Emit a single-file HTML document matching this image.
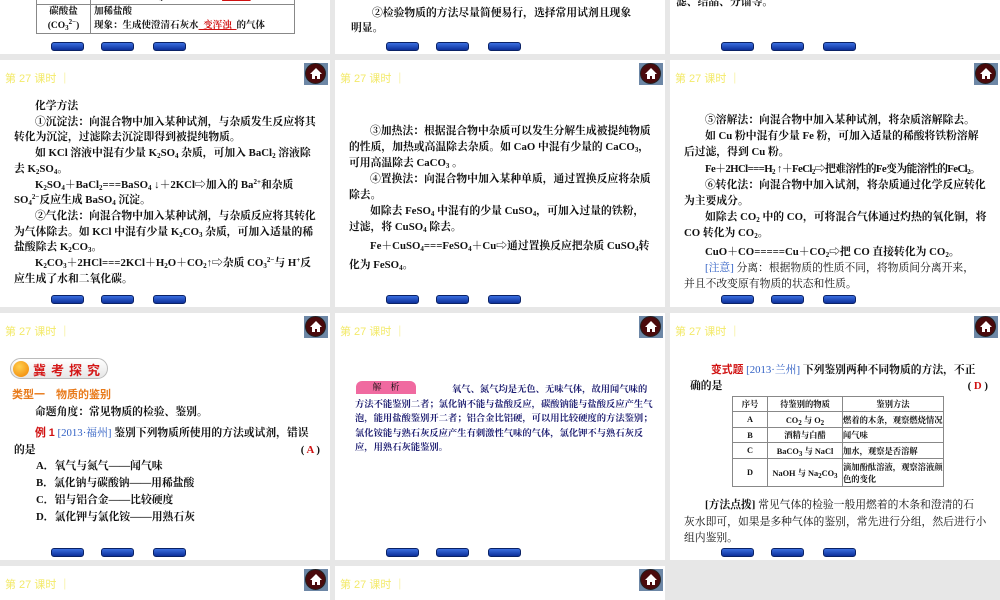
<!DOCTYPE html>
<html><head><meta charset="utf-8">
<style>
*{margin:0;padding:0;box-sizing:border-box}
html,body{width:1000px;height:600px;overflow:hidden}
body{background:#e7e7e7;position:relative;font-family:"Liberation Serif","Noto Serif CJK SC","Noto Sans CJK SC",serif;color:#111}
.s{position:absolute;width:330px;height:247px;background:#fff;overflow:hidden}
.hd{position:absolute;left:5px;top:10px;font:11px "Liberation Sans","Noto Sans CJK SC",sans-serif;color:#f3ea6a}
.home{position:absolute;left:304px;top:3px;width:24px;height:22px;background:#6d87a6}
.home i{position:absolute;left:1px;top:0;width:21px;height:21px;border-radius:50%;background:#4a0a0c;border:1px solid #222}
.home svg{position:absolute;left:5px;top:4px}
.nav{position:absolute;bottom:3px;height:9px;width:33px;border-radius:3px;background:linear-gradient(#3a6fe0,#0c2f9a);border:1px solid #0a2266}
.t{position:absolute;font-size:10.8px;line-height:16.8px;font-weight:bold}
.t div{white-space:nowrap}
.i{padding-left:21px}
.r{color:#d01010}
.bl{color:#2f5fc4}
sub,sup{font-size:7px;vertical-align:baseline;position:relative;line-height:0}
sub{top:2px}sup{top:-4px}
table{border-collapse:collapse}
td{border:1px solid #888}
</style></head><body>

<!-- row 0 -->
<div class="s" style="left:0;top:0;height:54px">
 <table style="position:absolute;left:36px;top:-11px;width:259px;font-size:9.5px;line-height:14px;font-weight:bold">
  <tr><td style="width:54px"></td><td style="padding-left:3px;white-space:nowrap">现象：与 CuSO<sub>4</sub> 溶液反应生成<span class="r"><u>&nbsp;&nbsp;蓝色&nbsp;&nbsp;</u></span>沉淀</td></tr>
  <tr><td style="text-align:center">碳酸盐<br>(CO<sub>3</sub><sup>2−</sup>)</td><td style="padding-left:3px;white-space:nowrap">加稀盐酸<br>现象：生成使澄清石灰水<span class="r"><u>&nbsp;&nbsp;变浑浊&nbsp;&nbsp;</u></span>的气体</td></tr>
 </table>
 <div class="nav" style="left:51px"></div><div class="nav" style="left:101px"></div><div class="nav" style="left:153px"></div>
</div>
<div class="s" style="left:335px;top:0;height:54px">
 <div class="t" style="left:16px;top:6px;line-height:15px"><div class="i">②检验物质的方法尽量简便易行，选择常用试剂且现象</div><div>明显。</div></div>
 <div class="nav" style="left:51px"></div><div class="nav" style="left:101px"></div><div class="nav" style="left:153px"></div>
</div>
<div class="s" style="left:670px;top:0;height:54px">
 <div class="t" style="left:6px;top:-6px">滤、结晶、分馏等。</div>
 <div class="nav" style="left:51px"></div><div class="nav" style="left:101px"></div><div class="nav" style="left:153px"></div>
</div>

<!-- row 1 -->
<div class="s" style="left:0;top:60px">
 <div class="hd">第 27 课时 ｜</div><div class="home"><i></i><svg width="14" height="13" viewBox="0 0 14 13"><path d="M7 1L1 7h2v5h3V9h2v3h3V7h2z" fill="#fff"/></svg></div>
 <div class="t" style="left:14px;top:39px;line-height:15.7px">
  <div class="i">化学方法</div>
  <div class="i">①沉淀法：向混合物中加入某种试剂，与杂质发生反应将其</div>
  <div>转化为沉淀，过滤除去沉淀即得到被提纯物质。</div>
  <div class="i">如 KCl 溶液中混有少量 K<sub>2</sub>SO<sub>4</sub> 杂质，可加入 BaCl<sub>2</sub> 溶液除</div>
  <div>去 K<sub>2</sub>SO<sub>4</sub>。</div>
  <div class="i">K<sub>2</sub>SO<sub>4</sub>＋BaCl<sub>2</sub>===BaSO<sub>4</sub> ↓＋2KCl⇨加入的 Ba<sup>2+</sup>和杂质</div>
  <div>SO<sub>4</sub><sup>2−</sup>反应生成 BaSO<sub>4</sub> 沉淀。</div>
  <div class="i">②气化法：向混合物中加入某种试剂，与杂质反应将其转化</div>
  <div>为气体除去。如 KCl 中混有少量 K<sub>2</sub>CO<sub>3</sub> 杂质，可加入适量的稀</div>
  <div>盐酸除去 K<sub>2</sub>CO<sub>3</sub>。</div>
  <div class="i">K<sub>2</sub>CO<sub>3</sub>＋2HCl===2KCl＋H<sub>2</sub>O＋CO<sub>2</sub>↑⇨杂质 CO<sub>3</sub><sup>2−</sup>与 H<sup>+</sup>反</div>
  <div>应生成了水和二氧化碳。</div>
 </div>
 <div class="nav" style="left:51px"></div><div class="nav" style="left:101px"></div><div class="nav" style="left:153px"></div>
</div>
<div class="s" style="left:335px;top:60px">
 <div class="hd">第 27 课时 ｜</div><div class="home"><i></i><svg width="14" height="13" viewBox="0 0 14 13"><path d="M7 1L1 7h2v5h3V9h2v3h3V7h2z" fill="#fff"/></svg></div>
 <div class="t" style="left:14px;top:63px;line-height:16px">
  <div class="i">③加热法：根据混合物中杂质可以发生分解生成被提纯物质</div>
  <div>的性质，加热或高温除去杂质。如 CaO 中混有少量的 CaCO<sub>3</sub>，</div>
  <div>可用高温除去 CaCO<sub>3</sub> 。</div>
  <div class="i">④置换法：向混合物中加入某种单质，通过置换反应将杂质</div>
  <div>除去。</div>
  <div class="i">如除去 FeSO<sub>4</sub> 中混有的少量 CuSO<sub>4</sub>，可加入过量的铁粉，</div>
  <div>过滤，将 CuSO<sub>4</sub> 除去。</div>
  <div class="i" style="margin-top:3px">Fe＋CuSO<sub>4</sub>===FeSO<sub>4</sub>＋Cu⇨通过置换反应把杂质 CuSO<sub>4</sub>转</div>
  <div style="margin-top:3px">化为 FeSO<sub>4</sub>。</div>
 </div>
 <div class="nav" style="left:51px"></div><div class="nav" style="left:101px"></div><div class="nav" style="left:153px"></div>
</div>
<div class="s" style="left:670px;top:60px">
 <div class="hd">第 27 课时 ｜</div><div class="home"><i></i><svg width="14" height="13" viewBox="0 0 14 13"><path d="M7 1L1 7h2v5h3V9h2v3h3V7h2z" fill="#fff"/></svg></div>
 <div class="t" style="left:14px;top:52px;line-height:16.2px">
  <div class="i">⑤溶解法：向混合物中加入某种试剂，将杂质溶解除去。</div>
  <div class="i">如 Cu 粉中混有少量 Fe 粉，可加入适量的稀酸将铁粉溶解</div>
  <div>后过滤，得到 Cu 粉。</div>
  <div class="i" style="letter-spacing:-0.6px">Fe＋2HCl===H<sub>2</sub> ↑＋FeCl<sub>2</sub>⇨把难溶性的Fe变为能溶性的FeCl<sub>2</sub>。</div>
  <div class="i">⑥转化法：向混合物中加入试剂，将杂质通过化学反应转化</div>
  <div>为主要成分。</div>
  <div class="i">如除去 CO<sub>2</sub> 中的 CO，可将混合气体通过灼热的氧化铜，将</div>
  <div>CO 转化为 CO<sub>2</sub>。</div>
  <div class="i" style="margin-top:2px">CuO＋CO=====Cu＋CO<sub>2</sub>⇨把 CO 直接转化为 CO<sub>2</sub>。</div>
  <div class="i" style="font-weight:normal"><span class="bl">[注意]</span> 分离：根据物质的性质不同，将物质间分离开来，</div>
  <div style="font-weight:normal">并且不改变原有物质的状态和性质。</div>
 </div>
 <div class="nav" style="left:51px"></div><div class="nav" style="left:101px"></div><div class="nav" style="left:153px"></div>
</div>

<!-- row 2 -->
<div class="s" style="left:0;top:313px">
 <div class="hd">第 27 课时 ｜</div><div class="home"><i></i><svg width="14" height="13" viewBox="0 0 14 13"><path d="M7 1L1 7h2v5h3V9h2v3h3V7h2z" fill="#fff"/></svg></div>
 <div style="position:absolute;left:10px;top:45px;width:98px;height:21px;border-radius:11px;border:1px solid #bbb;background:linear-gradient(#fff,#e6e6e6)"><i style="position:absolute;left:2px;top:2px;width:16px;height:16px;border-radius:50%;background:radial-gradient(circle at 40% 35%,#ffd050,#f08000)"></i><span style="position:absolute;left:22px;top:1px;font:bold 13px 'Noto Sans CJK SC',sans-serif;color:#d41818;letter-spacing:5px">冀考探究</span></div>
 <div style="position:absolute;left:12px;top:73px;font:bold 11px 'Liberation Sans','Noto Sans CJK SC',sans-serif;color:#e87a1a">类型一　物质的鉴别</div>
 <div class="t" style="left:14px;top:91px;width:306px">
  <div class="i">命题角度：常见物质的检验、鉴别。</div>
  <div class="i" style="margin-top:4px"><span class="r" style="font-family:'Liberation Sans',sans-serif">例 1</span> <span class="bl" style="font-weight:normal">[2013·福州]</span> 鉴别下列物质所使用的方法或试剂，错误</div>
  <div>的是<span style="float:right">( <span class="r">A</span> )</span></div>
  <div style="padding-left:22px">A．氧气与氮气——闻气味</div>
  <div style="padding-left:22px">B．氯化钠与碳酸钠——用稀盐酸</div>
  <div style="padding-left:22px">C．铝与铝合金——比较硬度</div>
  <div style="padding-left:22px">D．氯化钾与氯化铵——用熟石灰</div>
 </div>
 <div class="nav" style="left:51px"></div><div class="nav" style="left:101px"></div><div class="nav" style="left:153px"></div>
</div>
<div class="s" style="left:335px;top:313px">
 <div class="hd">第 27 课时 ｜</div><div class="home"><i></i><svg width="14" height="13" viewBox="0 0 14 13"><path d="M7 1L1 7h2v5h3V9h2v3h3V7h2z" fill="#fff"/></svg></div>
 <div style="position:absolute;left:21px;top:68px;width:60px;height:13px;background:#f06aa0;border-radius:6px 6px 0 0;color:#111;font-size:9px;text-align:center;line-height:13px">解　析</div>
 <div class="t" style="left:20px;top:70px;font-size:9.3px;line-height:14.5px;color:#1c1c70">
  <div style="padding-left:97px">氧气、氮气均是无色、无味气体，故用闻气味的</div>
  <div>方法不能鉴别二者；氯化钠不能与盐酸反应，碳酸钠能与盐酸反应产生气</div>
  <div>泡，能用盐酸鉴别开二者；铝合金比铝硬，可以用比较硬度的方法鉴别；</div>
  <div>氯化铵能与熟石灰反应产生有刺激性气味的气体，氯化钾不与熟石灰反</div>
  <div>应，用熟石灰能鉴别。</div>
 </div>
 <div class="nav" style="left:51px"></div><div class="nav" style="left:101px"></div><div class="nav" style="left:153px"></div>
</div>
<div class="s" style="left:670px;top:313px">
 <div class="hd">第 27 课时 ｜</div><div class="home"><i></i><svg width="14" height="13" viewBox="0 0 14 13"><path d="M7 1L1 7h2v5h3V9h2v3h3V7h2z" fill="#fff"/></svg></div>
 <div class="t" style="left:20px;top:48px;width:298px;line-height:16px">
  <div class="i"><span class="r" style="font-family:'Noto Sans CJK SC',sans-serif">变式题</span> <span class="bl" style="font-weight:normal">[2013·兰州]</span> 下列鉴别两种不同物质的方法，不正</div>
  <div>确的是<span style="float:right">( <span class="r">D</span> )</span></div>
 </div>
 <table style="position:absolute;left:62px;top:83px;width:212px;font-size:8.3px;font-weight:bold;text-align:center;white-space:nowrap">
  <tr style="height:15px"><td style="width:35px">序号</td><td style="width:75px">待鉴别的物质</td><td>鉴别方法</td></tr>
  <tr style="height:16px"><td>A</td><td>CO<sub>2</sub> 与 O<sub>2</sub></td><td style="text-align:left">燃着的木条，观察燃烧情况</td></tr>
  <tr style="height:15px"><td>B</td><td>酒精与白醋</td><td style="text-align:left">闻气味</td></tr>
  <tr style="height:16px"><td>C</td><td>BaCO<sub>3</sub> 与 NaCl</td><td style="text-align:left">加水，观察是否溶解</td></tr>
  <tr style="height:28px"><td>D</td><td>NaOH 与 Na<sub>2</sub>CO<sub>3</sub></td><td style="text-align:left">滴加酚酞溶液，观察溶液颜<br>色的变化</td></tr>
 </table>
 <div class="t" style="left:14px;top:184px;font-weight:normal;line-height:16.5px">
  <div class="i"><b>[方法点拨]</b> 常见气体的检验一般用燃着的木条和澄清的石</div>
  <div>灰水即可，如果是多种气体的鉴别，常先进行分组，然后进行小</div>
  <div>组内鉴别。</div>
 </div>
 <div class="nav" style="left:51px"></div><div class="nav" style="left:101px"></div><div class="nav" style="left:153px"></div>
</div>

<!-- row 3 -->
<div class="s" style="left:0;top:566px;height:34px">
 <div class="hd">第 27 课时 ｜</div><div class="home"><i></i><svg width="14" height="13" viewBox="0 0 14 13"><path d="M7 1L1 7h2v5h3V9h2v3h3V7h2z" fill="#fff"/></svg></div>
</div>
<div class="s" style="left:335px;top:566px;height:34px">
 <div class="hd">第 27 课时 ｜</div><div class="home"><i></i><svg width="14" height="13" viewBox="0 0 14 13"><path d="M7 1L1 7h2v5h3V9h2v3h3V7h2z" fill="#fff"/></svg></div>
</div>
</body></html>
